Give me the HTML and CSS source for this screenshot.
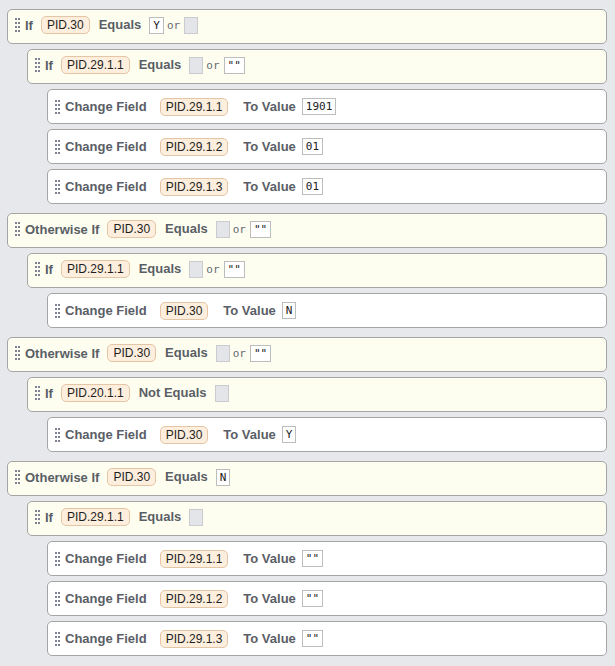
FILE: index.html
```html
<!DOCTYPE html>
<html>
<head>
<meta charset="utf-8">
<link rel="stylesheet" href="styles.css">
</head>
<body>
<div class="tree">
  <div class="block cond first">
    <svg class="grip" width="5" height="14" viewBox="0 0 5 14"><g fill="#7d8394"><rect x="0" y="0" width="2" height="2"/><rect x="3" y="0" width="2" height="2"/><rect x="0" y="4" width="2" height="2"/><rect x="3" y="4" width="2" height="2"/><rect x="0" y="8" width="2" height="2"/><rect x="3" y="8" width="2" height="2"/><rect x="0" y="12" width="2" height="2"/><rect x="3" y="12" width="2" height="2"/></g></svg>
    <span class="label">If</span><span class="pill">PID.30</span><span class="kw">Equals</span><span class="val">Y</span><span class="or">or</span><span class="empty"></span>
  </div>
  <div class="children">
    <div class="block cond">
      <svg class="grip" width="5" height="14" viewBox="0 0 5 14"><g fill="#7d8394"><rect x="0" y="0" width="2" height="2"/><rect x="3" y="0" width="2" height="2"/><rect x="0" y="4" width="2" height="2"/><rect x="3" y="4" width="2" height="2"/><rect x="0" y="8" width="2" height="2"/><rect x="3" y="8" width="2" height="2"/><rect x="0" y="12" width="2" height="2"/><rect x="3" y="12" width="2" height="2"/></g></svg>
      <span class="label">If</span><span class="pill">PID.29.1.1</span><span class="kw">Equals</span><span class="empty"></span><span class="or">or</span><span class="val">""</span>
    </div>
    <div class="children">
      <div class="block action">
        <svg class="grip" width="5" height="14" viewBox="0 0 5 14"><g fill="#7d8394"><rect x="0" y="0" width="2" height="2"/><rect x="3" y="0" width="2" height="2"/><rect x="0" y="4" width="2" height="2"/><rect x="3" y="4" width="2" height="2"/><rect x="0" y="8" width="2" height="2"/><rect x="3" y="8" width="2" height="2"/><rect x="0" y="12" width="2" height="2"/><rect x="3" y="12" width="2" height="2"/></g></svg>
        <span class="label">Change Field</span><span class="pill">PID.29.1.1</span><span class="kw">To Value</span><span class="val">1901</span>
      </div>
      <div class="block action">
        <svg class="grip" width="5" height="14" viewBox="0 0 5 14"><g fill="#7d8394"><rect x="0" y="0" width="2" height="2"/><rect x="3" y="0" width="2" height="2"/><rect x="0" y="4" width="2" height="2"/><rect x="3" y="4" width="2" height="2"/><rect x="0" y="8" width="2" height="2"/><rect x="3" y="8" width="2" height="2"/><rect x="0" y="12" width="2" height="2"/><rect x="3" y="12" width="2" height="2"/></g></svg>
        <span class="label">Change Field</span><span class="pill">PID.29.1.2</span><span class="kw">To Value</span><span class="val">01</span>
      </div>
      <div class="block action">
        <svg class="grip" width="5" height="14" viewBox="0 0 5 14"><g fill="#7d8394"><rect x="0" y="0" width="2" height="2"/><rect x="3" y="0" width="2" height="2"/><rect x="0" y="4" width="2" height="2"/><rect x="3" y="4" width="2" height="2"/><rect x="0" y="8" width="2" height="2"/><rect x="3" y="8" width="2" height="2"/><rect x="0" y="12" width="2" height="2"/><rect x="3" y="12" width="2" height="2"/></g></svg>
        <span class="label">Change Field</span><span class="pill">PID.29.1.3</span><span class="kw">To Value</span><span class="val">01</span>
      </div>
    </div>
  </div>

  <div class="block cond top">
    <svg class="grip" width="5" height="14" viewBox="0 0 5 14"><g fill="#7d8394"><rect x="0" y="0" width="2" height="2"/><rect x="3" y="0" width="2" height="2"/><rect x="0" y="4" width="2" height="2"/><rect x="3" y="4" width="2" height="2"/><rect x="0" y="8" width="2" height="2"/><rect x="3" y="8" width="2" height="2"/><rect x="0" y="12" width="2" height="2"/><rect x="3" y="12" width="2" height="2"/></g></svg>
    <span class="label">Otherwise If</span><span class="pill">PID.30</span><span class="kw">Equals</span><span class="empty"></span><span class="or">or</span><span class="val">""</span>
  </div>
  <div class="children">
    <div class="block cond">
      <svg class="grip" width="5" height="14" viewBox="0 0 5 14"><g fill="#7d8394"><rect x="0" y="0" width="2" height="2"/><rect x="3" y="0" width="2" height="2"/><rect x="0" y="4" width="2" height="2"/><rect x="3" y="4" width="2" height="2"/><rect x="0" y="8" width="2" height="2"/><rect x="3" y="8" width="2" height="2"/><rect x="0" y="12" width="2" height="2"/><rect x="3" y="12" width="2" height="2"/></g></svg>
      <span class="label">If</span><span class="pill">PID.29.1.1</span><span class="kw">Equals</span><span class="empty"></span><span class="or">or</span><span class="val">""</span>
    </div>
    <div class="children">
      <div class="block action">
        <svg class="grip" width="5" height="14" viewBox="0 0 5 14"><g fill="#7d8394"><rect x="0" y="0" width="2" height="2"/><rect x="3" y="0" width="2" height="2"/><rect x="0" y="4" width="2" height="2"/><rect x="3" y="4" width="2" height="2"/><rect x="0" y="8" width="2" height="2"/><rect x="3" y="8" width="2" height="2"/><rect x="0" y="12" width="2" height="2"/><rect x="3" y="12" width="2" height="2"/></g></svg>
        <span class="label">Change Field</span><span class="pill">PID.30</span><span class="kw">To Value</span><span class="val">N</span>
      </div>
    </div>
  </div>

  <div class="block cond top">
    <svg class="grip" width="5" height="14" viewBox="0 0 5 14"><g fill="#7d8394"><rect x="0" y="0" width="2" height="2"/><rect x="3" y="0" width="2" height="2"/><rect x="0" y="4" width="2" height="2"/><rect x="3" y="4" width="2" height="2"/><rect x="0" y="8" width="2" height="2"/><rect x="3" y="8" width="2" height="2"/><rect x="0" y="12" width="2" height="2"/><rect x="3" y="12" width="2" height="2"/></g></svg>
    <span class="label">Otherwise If</span><span class="pill">PID.30</span><span class="kw">Equals</span><span class="empty"></span><span class="or">or</span><span class="val">""</span>
  </div>
  <div class="children">
    <div class="block cond">
      <svg class="grip" width="5" height="14" viewBox="0 0 5 14"><g fill="#7d8394"><rect x="0" y="0" width="2" height="2"/><rect x="3" y="0" width="2" height="2"/><rect x="0" y="4" width="2" height="2"/><rect x="3" y="4" width="2" height="2"/><rect x="0" y="8" width="2" height="2"/><rect x="3" y="8" width="2" height="2"/><rect x="0" y="12" width="2" height="2"/><rect x="3" y="12" width="2" height="2"/></g></svg>
      <span class="label">If</span><span class="pill">PID.20.1.1</span><span class="kw">Not Equals</span><span class="empty"></span>
    </div>
    <div class="children">
      <div class="block action">
        <svg class="grip" width="5" height="14" viewBox="0 0 5 14"><g fill="#7d8394"><rect x="0" y="0" width="2" height="2"/><rect x="3" y="0" width="2" height="2"/><rect x="0" y="4" width="2" height="2"/><rect x="3" y="4" width="2" height="2"/><rect x="0" y="8" width="2" height="2"/><rect x="3" y="8" width="2" height="2"/><rect x="0" y="12" width="2" height="2"/><rect x="3" y="12" width="2" height="2"/></g></svg>
        <span class="label">Change Field</span><span class="pill">PID.30</span><span class="kw">To Value</span><span class="val">Y</span>
      </div>
    </div>
  </div>

  <div class="block cond top">
    <svg class="grip" width="5" height="14" viewBox="0 0 5 14"><g fill="#7d8394"><rect x="0" y="0" width="2" height="2"/><rect x="3" y="0" width="2" height="2"/><rect x="0" y="4" width="2" height="2"/><rect x="3" y="4" width="2" height="2"/><rect x="0" y="8" width="2" height="2"/><rect x="3" y="8" width="2" height="2"/><rect x="0" y="12" width="2" height="2"/><rect x="3" y="12" width="2" height="2"/></g></svg>
    <span class="label">Otherwise If</span><span class="pill">PID.30</span><span class="kw">Equals</span><span class="val">N</span>
  </div>
  <div class="children">
    <div class="block cond">
      <svg class="grip" width="5" height="14" viewBox="0 0 5 14"><g fill="#7d8394"><rect x="0" y="0" width="2" height="2"/><rect x="3" y="0" width="2" height="2"/><rect x="0" y="4" width="2" height="2"/><rect x="3" y="4" width="2" height="2"/><rect x="0" y="8" width="2" height="2"/><rect x="3" y="8" width="2" height="2"/><rect x="0" y="12" width="2" height="2"/><rect x="3" y="12" width="2" height="2"/></g></svg>
      <span class="label">If</span><span class="pill">PID.29.1.1</span><span class="kw">Equals</span><span class="empty"></span>
    </div>
    <div class="children">
      <div class="block action">
        <svg class="grip" width="5" height="14" viewBox="0 0 5 14"><g fill="#7d8394"><rect x="0" y="0" width="2" height="2"/><rect x="3" y="0" width="2" height="2"/><rect x="0" y="4" width="2" height="2"/><rect x="3" y="4" width="2" height="2"/><rect x="0" y="8" width="2" height="2"/><rect x="3" y="8" width="2" height="2"/><rect x="0" y="12" width="2" height="2"/><rect x="3" y="12" width="2" height="2"/></g></svg>
        <span class="label">Change Field</span><span class="pill">PID.29.1.1</span><span class="kw">To Value</span><span class="val">""</span>
      </div>
      <div class="block action">
        <svg class="grip" width="5" height="14" viewBox="0 0 5 14"><g fill="#7d8394"><rect x="0" y="0" width="2" height="2"/><rect x="3" y="0" width="2" height="2"/><rect x="0" y="4" width="2" height="2"/><rect x="3" y="4" width="2" height="2"/><rect x="0" y="8" width="2" height="2"/><rect x="3" y="8" width="2" height="2"/><rect x="0" y="12" width="2" height="2"/><rect x="3" y="12" width="2" height="2"/></g></svg>
        <span class="label">Change Field</span><span class="pill">PID.29.1.2</span><span class="kw">To Value</span><span class="val">""</span>
      </div>
      <div class="block action">
        <svg class="grip" width="5" height="14" viewBox="0 0 5 14"><g fill="#7d8394"><rect x="0" y="0" width="2" height="2"/><rect x="3" y="0" width="2" height="2"/><rect x="0" y="4" width="2" height="2"/><rect x="3" y="4" width="2" height="2"/><rect x="0" y="8" width="2" height="2"/><rect x="3" y="8" width="2" height="2"/><rect x="0" y="12" width="2" height="2"/><rect x="3" y="12" width="2" height="2"/></g></svg>
        <span class="label">Change Field</span><span class="pill">PID.29.1.3</span><span class="kw">To Value</span><span class="val">""</span>
      </div>
    </div>
  </div>
</div>
</body>
</html>
```

FILE: styles.css
```css
html, body {
  margin: 0;
  padding: 0;
  background: #e7e8ec;
}

body {
  font-family: "Liberation Sans", Arial, sans-serif;
}

.tree {
  padding: 4px 8px 0 7px;
}

.children {
  margin-left: 20px;
}

.block {
  display: flex;
  align-items: center;
  box-sizing: border-box;
  height: 35px;
  margin-top: 5px;
  padding-left: 7px;
  border: 1px solid #a5a5a5;
  border-radius: 5px;
  background: #ffffff;
}

.block.top {
  margin-top: 9px;
}

.block.cond {
  background: #fefef0;
  padding-bottom: 3px;
}

.grip {
  flex: none;
  margin-right: 5px;
}

.label,
.kw {
  font-size: 13px;
  font-weight: bold;
  color: #5a5e66;
  white-space: nowrap;
}

.cond .label {
  margin-right: 8px;
}

.cond .kw {
  margin-left: 9px;
  margin-right: 8px;
  position: relative;
  top: -1px;
}

.action .label {
  margin-right: 13px;
}

.action .kw {
  margin-left: 15px;
  margin-right: 6px;
}

.pill {
  box-sizing: border-box;
  height: 18px;
  line-height: 16px;
  padding: 0 5px;
  border: 1px solid #e4c6a6;
  border-radius: 5px;
  background: #fdeedd;
  font-size: 12px;
  color: #1e1e1e;
  white-space: nowrap;
}

.val {
  box-sizing: border-box;
  height: 17px;
  line-height: 15px;
  padding: 0 3px;
  border: 1px solid #bdbdbd;
  background: #ffffff;
  font-family: "DejaVu Sans Mono", monospace;
  font-size: 11px;
  color: #222;
  white-space: pre;
}

.empty {
  box-sizing: border-box;
  width: 14px;
  height: 17px;
  border: 1px solid #c9cbcf;
  background: #e3e5e9;
}

.or {
  margin: 0 4px 0 3px;
  font-family: "DejaVu Sans Mono", monospace;
  font-size: 11px;
  color: #666a70;
}
```
